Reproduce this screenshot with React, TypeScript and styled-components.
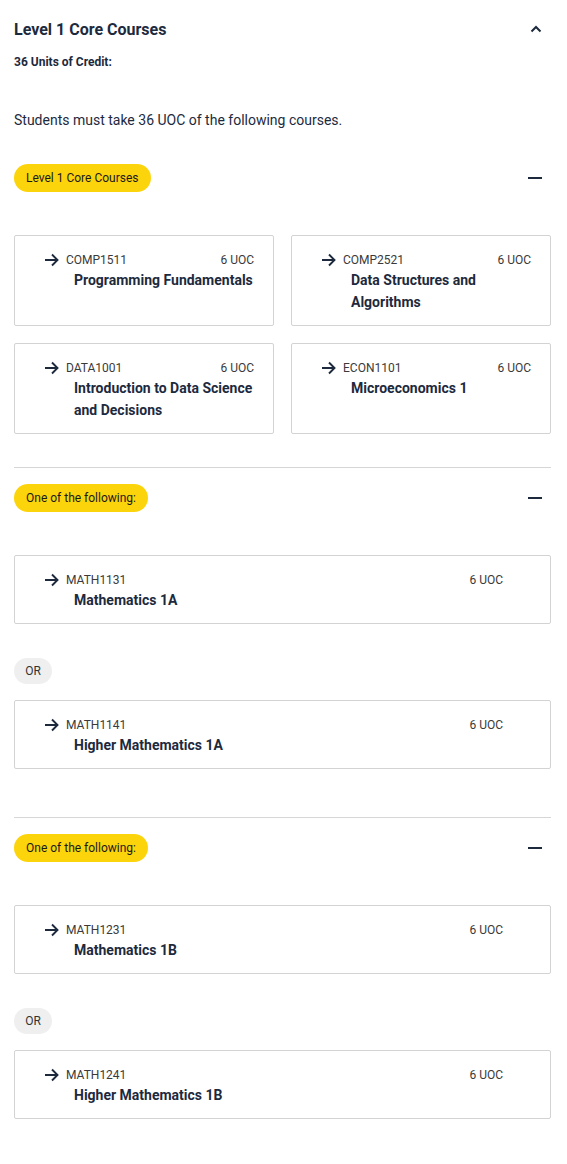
import React from 'react'
import styled, { createGlobalStyle } from 'styled-components'

const GlobalStyle = createGlobalStyle`
  body {
    margin: 0;
    background: #fff;
    font-family: Roboto, 'Noto Sans', Arial, sans-serif;
    color: #1d2a3e;
  }
  * { box-sizing: border-box; }
`

type Course = { code: string; title: string; uoc: number }

const coreCourses: Course[] = [
  { code: 'COMP1511', title: 'Programming Fundamentals', uoc: 6 },
  { code: 'COMP2521', title: 'Data Structures and Algorithms', uoc: 6 },
  { code: 'DATA1001', title: 'Introduction to Data Science and Decisions', uoc: 6 },
  { code: 'ECON1101', title: 'Microeconomics 1', uoc: 6 },
]

const choiceGroups: Course[][] = [
  [
    { code: 'MATH1131', title: 'Mathematics 1A', uoc: 6 },
    { code: 'MATH1141', title: 'Higher Mathematics 1A', uoc: 6 },
  ],
  [
    { code: 'MATH1231', title: 'Mathematics 1B', uoc: 6 },
    { code: 'MATH1241', title: 'Higher Mathematics 1B', uoc: 6 },
  ],
]

const Page = styled.div`
  padding: 0 16px 40px 14px;
`

const Header = styled.div`
  display: flex;
  align-items: center;
  justify-content: space-between;
  height: 30px;
  margin-top: 14px;
  padding-right: 8px;
`

const Title = styled.h2`
  margin: 0;
  font-size: 16px;
  font-weight: 700;
  color: #1d2a3e;
`

const Credit = styled.div`
  margin-top: 11px;
  font-size: 12px;
  font-weight: 700;
  color: #1d2a3e;
`

const Intro = styled.p`
  margin: 41px 0 0;
  font-size: 14px;
  line-height: 20px;
  color: #1d2a3e;
`

const Section = styled.section<{ $divided?: boolean }>`
  border-top: ${(p) => (p.$divided ? '1px solid #d6d6d6' : 'none')};
  padding-top: ${(p) => (p.$divided ? '16px' : '34px')};
`

const SectionHead = styled.div`
  display: flex;
  align-items: center;
  justify-content: space-between;
  padding-right: 9px;
`

const Pill = styled.span`
  display: inline-flex;
  align-items: center;
  height: 28px;
  padding: 0 12px;
  border-radius: 14px;
  background: #fcd40c;
  font-size: 12px;
  color: #1a1a1a;
`

const Grid = styled.div`
  display: grid;
  grid-template-columns: 1fr 1fr;
  gap: 17px 17px;
  margin-top: 43px;
  padding-bottom: 33px;
`

const List = styled.div`
  display: flex;
  flex-direction: column;
  margin-top: 43px;
  padding-bottom: 48px;
`

const Card = styled.div<{ $right: number }>`
  display: flex;
  align-items: flex-start;
  border: 1px solid #d3d3d3;
  border-radius: 2px;
  padding: 15px ${(p) => p.$right}px 12px 29px;
`

const Arrow = styled.svg`
  flex: none;
  width: 16px;
  height: 16px;
  margin-top: 1px;
  margin-right: 6px;
`

const Body = styled.div`
  flex: 1;
  min-width: 0;
`

const CodeRow = styled.div`
  display: flex;
  justify-content: space-between;
  font-size: 12px;
  line-height: 18px;
  color: #3a3a3a;
`

const CourseTitle = styled.div`
  padding-left: 8px;
  font-size: 14px;
  font-weight: 700;
  line-height: 22px;
  color: #1d2a3e;
`

const OrBadge = styled.span`
  align-self: flex-start;
  display: inline-flex;
  align-items: center;
  justify-content: center;
  width: 38px;
  height: 26px;
  border-radius: 13px;
  background: #efefef;
  font-size: 12px;
  color: #333;
  margin: 34px 0 16px;
`

const IconBtn = styled.svg`
  width: 14px;
  height: 14px;
`

const ChevronUp = () => (
  <IconBtn viewBox="0 0 14 14" fill="none">
    <path d="M2.5 9.5 7 5l4.5 4.5" stroke="#1d2a3e" strokeWidth="2" />
  </IconBtn>
)

const Minus = () => (
  <IconBtn viewBox="0 0 14 14">
    <rect x="0" y="6" width="14" height="2" fill="#1d2a3e" />
  </IconBtn>
)

const CourseCard = ({ course, right }: { course: Course; right: number }) => (
  <Card $right={right}>
    <Arrow viewBox="0 0 16 16" fill="none">
      <path d="M1 8h12.5M8 2.5 13.5 8 8 13.5" stroke="#1d2a3e" strokeWidth="1.9" />
    </Arrow>
    <Body>
      <CodeRow>
        <span>{course.code}</span>
        <span>{course.uoc} UOC</span>
      </CodeRow>
      <CourseTitle>{course.title}</CourseTitle>
    </Body>
  </Card>
)

const App = () => (
  <>
    <GlobalStyle />
    <Page>
      <Header>
        <Title>Level 1 Core Courses</Title>
        <ChevronUp />
      </Header>
      <Credit>36 Units of Credit:</Credit>
      <Intro>Students must take 36 UOC of the following courses.</Intro>

      <Section>
        <SectionHead>
          <Pill>Level 1 Core Courses</Pill>
          <Minus />
        </SectionHead>
        <Grid>
          {coreCourses.map((c) => (
            <CourseCard key={c.code} course={c} right={19} />
          ))}
        </Grid>
      </Section>

      {choiceGroups.map((group, gi) => (
        <Section key={gi} $divided>
          <SectionHead>
            <Pill>One of the following:</Pill>
            <Minus />
          </SectionHead>
          <List>
            {group.map((c, i) => (
              <React.Fragment key={c.code}>
                {i > 0 && <OrBadge>OR</OrBadge>}
                <CourseCard course={c} right={47} />
              </React.Fragment>
            ))}
          </List>
        </Section>
      ))}
    </Page>
  </>
)

export default App
